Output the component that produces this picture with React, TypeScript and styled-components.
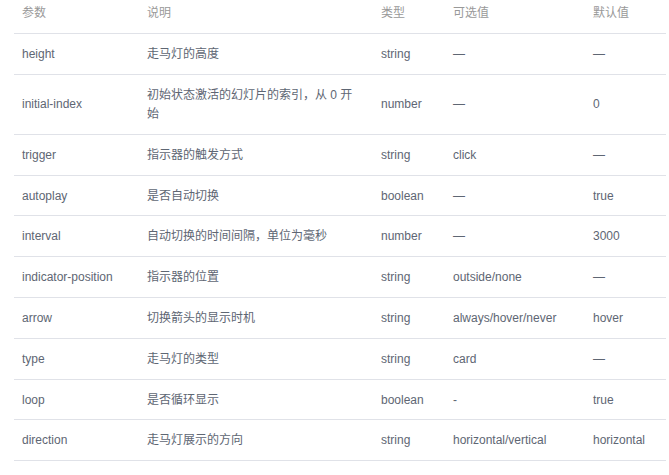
import React from "react";
import styled, { createGlobalStyle } from "styled-components";

const GlobalStyle = createGlobalStyle`
  html, body {
    margin: 0;
    padding: 0;
    background: #fff;
  }
`;

const Page = styled.div`
  padding: 0 3px 0 14px;
  font-family: "Liberation Sans", "Noto Sans CJK SC", sans-serif;
  font-size: 12px;
`;

const Table = styled.table`
  width: 652px;
  table-layout: fixed;
  border-collapse: collapse;
  border-spacing: 0;
`;

const Col = styled.col<{ $w: number }>`
  width: ${(p) => p.$w}px;
`;

const HeadCell = styled.th`
  text-align: left;
  font-weight: normal;
  color: #999;
  line-height: 19.2px;
  padding: 4px 14px 9.8px 8px;
  border-bottom: 1px solid #e0e2e8;
`;

const Cell = styled.td`
  color: #5e6673;
  line-height: 19.2px;
  padding: 11px 14px 9.6px 8px;
  border-bottom: 1px solid #e0e2e8;
  vertical-align: middle;
`;

type Attr = {
  name: string;
  desc: string;
  type: string;
  options: string;
  def: string;
};

const rows: Attr[] = [
  { name: "height", desc: "走马灯的高度", type: "string", options: "—", def: "—" },
  {
    name: "initial-index",
    desc: "初始状态激活的幻灯片的索引，从 0 开始",
    type: "number",
    options: "—",
    def: "0",
  },
  { name: "trigger", desc: "指示器的触发方式", type: "string", options: "click", def: "—" },
  { name: "autoplay", desc: "是否自动切换", type: "boolean", options: "—", def: "true" },
  { name: "interval", desc: "自动切换的时间间隔，单位为毫秒", type: "number", options: "—", def: "3000" },
  { name: "indicator-position", desc: "指示器的位置", type: "string", options: "outside/none", def: "—" },
  { name: "arrow", desc: "切换箭头的显示时机", type: "string", options: "always/hover/never", def: "hover" },
  { name: "type", desc: "走马灯的类型", type: "string", options: "card", def: "—" },
  { name: "loop", desc: "是否循环显示", type: "boolean", options: "-", def: "true" },
  { name: "direction", desc: "走马灯展示的方向", type: "string", options: "horizontal/vertical", def: "horizontal" },
];

const widths = [125, 234, 72, 140, 81];

export default function App() {
  return (
    <Page>
      <GlobalStyle />
      <Table>
        <colgroup>
          {widths.map((w, i) => (
            <Col key={i} $w={w} />
          ))}
        </colgroup>
        <thead>
          <tr>
            <HeadCell>参数</HeadCell>
            <HeadCell>说明</HeadCell>
            <HeadCell>类型</HeadCell>
            <HeadCell>可选值</HeadCell>
            <HeadCell>默认值</HeadCell>
          </tr>
        </thead>
        <tbody>
          {rows.map((r) => (
            <tr key={r.name}>
              <Cell>{r.name}</Cell>
              <Cell>{r.desc}</Cell>
              <Cell>{r.type}</Cell>
              <Cell>{r.options}</Cell>
              <Cell>{r.def}</Cell>
            </tr>
          ))}
        </tbody>
      </Table>
    </Page>
  );
}
